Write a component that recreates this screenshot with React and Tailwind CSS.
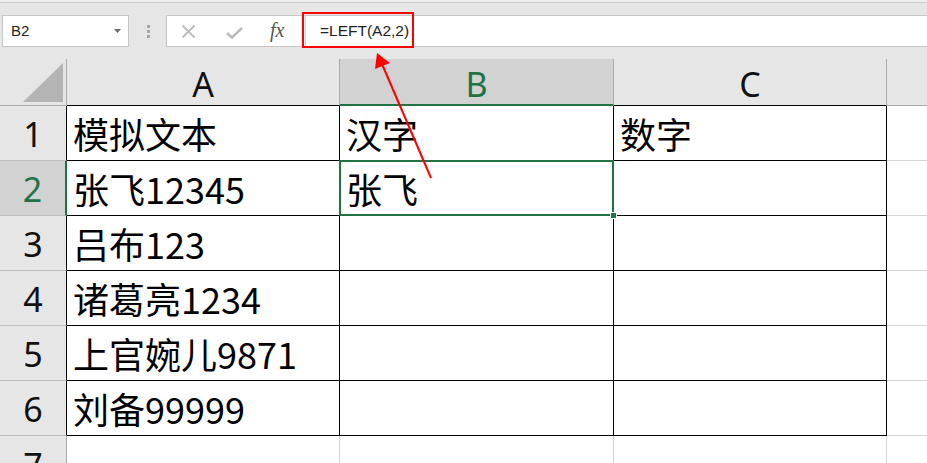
const ROWS = [
  ['模拟文本', '汉字', '数字'],
  ['张飞12345', '张飞', ''],
  ['吕布123', '', ''],
  ['诸葛亮1234', '', ''],
  ['上官婉儿9871', '', ''],
  ['刘备99999', '', ''],
]

const CELL_FONT = "font-['Noto_Sans_CJK_SC','Noto_Sans',sans-serif]"

function HeaderRow() {
  return (
    <div className="flex h-[47px]">
      {/* corner with select-all triangle */}
      <div className="w-[67px] shrink-0 border-r border-b border-[#ababab] relative">
        <svg width="67" height="47" className="absolute inset-0">
          <polygon points="23,43 63,4 63,43" fill="#b4b4b4" />
        </svg>
      </div>
      <div className="w-[273px] shrink-0 border-r border-[#ababab] border-b border-b-black flex items-center justify-center pt-[5px] text-[34px] text-[#111]">A</div>
      <div className="w-[274px] shrink-0 border-r border-[#ababab] border-b-2 border-b-[#217346] bg-[#d2d2d2] flex items-center justify-center pt-[6px] text-[34px] text-[#217346]">B</div>
      <div className="w-[273px] shrink-0 border-r border-[#ababab] border-b border-b-black flex items-center justify-center pt-[5px] text-[34px] text-[#111]">C</div>
      <div className="flex-1 border-b border-[#ababab]" />
    </div>
  )
}

function DataRow({ n, cells }) {
  const active = n === 2
  return (
    <div className="flex h-[55px]">
      <div
        className={
          active
            ? 'w-[67px] shrink-0 bg-[#d2d2d2] border-b border-[#bdbdbd] border-r-2 border-r-[#217346] flex items-center justify-center pt-[3px] text-[34px] text-[#217346]'
            : 'w-[67px] shrink-0 border-b border-[#bdbdbd] border-r border-r-black flex items-center justify-center pt-[3px] text-[34px] text-[#111]'
        }
      >
        {n}
      </div>
      {cells.map((text, i) => (
        <div
          key={i}
          className={`${i === 1 ? 'w-[274px]' : 'w-[273px]'} shrink-0 bg-white border-r border-b border-black relative flex items-center pl-[6px] ${CELL_FONT} text-[36px] leading-none text-black`}
        >
          {text}
          {active && i === 1 && (
            <div className="absolute top-[-1px] left-[-1px] right-[-1px] bottom-[-1px] border-2 border-[#217346] z-10">
              <div className="absolute right-[-5px] bottom-[-5px] w-[7px] h-[7px] bg-[#217346] border border-white" />
            </div>
          )}
        </div>
      ))}
      <div className="flex-1 bg-white border-b border-[#d4d4d4]" />
    </div>
  )
}

function EmptyRow({ n }) {
  return (
    <div className="flex h-[55px]">
      <div className="w-[67px] shrink-0 border-r border-[#ababab] flex items-center justify-center pt-[3px] text-[34px] text-[#111]">{n}</div>
      <div className="w-[273px] shrink-0 bg-white border-r border-[#d4d4d4]" />
      <div className="w-[274px] shrink-0 bg-white border-r border-[#d4d4d4]" />
      <div className="w-[273px] shrink-0 bg-white border-r border-[#d4d4d4]" />
      <div className="flex-1 bg-white" />
    </div>
  )
}

export default function App() {
  return (
    <div className="relative w-[927px] h-[463px] overflow-hidden bg-[#e6e6e6] font-['Noto_Sans',sans-serif]">
      <div className="h-[2px] bg-[#eeeeee]" />
      <div className="h-px bg-[#cfcfcf]" />

      {/* formula bar */}
      <div className="mt-[12px] flex h-[32px]">
        <div className="ml-[2px] w-[127px] shrink-0 bg-white border border-[#c6c6c6] flex items-center justify-between pl-[8px] pr-[7px] font-['Liberation_Sans',sans-serif] text-[15px] text-[#222]">
          <span>B2</span>
          <svg width="7" height="4"><polygon points="0,0 7,0 3.5,4" fill="#6a6a6a" /></svg>
        </div>
        <div className="w-[37px] shrink-0 flex flex-col items-center justify-center gap-[2px] pl-[1px]">
          <span className="w-[3px] h-[3px] bg-[#a8a8a8]" />
          <span className="w-[3px] h-[3px] bg-[#a8a8a8]" />
          <span className="w-[3px] h-[3px] bg-[#a8a8a8]" />
        </div>
        <div className="flex-1 bg-white border border-[#c6c6c6] border-r-0 flex items-center">
          <svg width="15" height="15" className="ml-[14px] shrink-0" viewBox="0 0 15 15">
            <path d="M1.5 1.5 L13.5 13.5 M13.5 1.5 L1.5 13.5" stroke="#bcbcbc" strokeWidth="1.8" fill="none" />
          </svg>
          <svg width="17" height="12" className="ml-[30px] mt-[3px] shrink-0" viewBox="0 0 17 12">
            <path d="M1 6 L6 10.5 L16 1" stroke="#bcbcbc" strokeWidth="2.6" fill="none" />
          </svg>
          <span className="ml-[27px] w-[20px] shrink-0 font-['Liberation_Serif',serif] italic text-[20px] leading-none text-[#555] pb-[2px]">fx</span>
          <div className="ml-[15px] h-full flex-1 border-l border-[#d4d4d4] flex items-center pl-[14px] font-['Liberation_Sans',sans-serif] text-[15.5px] text-[#222]">
            =LEFT(A2,2)
          </div>
        </div>
      </div>

      {/* sheet */}
      <div className="mt-[12px]">
        <HeaderRow />
        {ROWS.map((cells, i) => (
          <DataRow key={i} n={i + 1} cells={cells} />
        ))}
        <EmptyRow n={7} />
      </div>

      {/* annotations */}
      <svg width="927" height="463" className="absolute inset-0 pointer-events-none z-20">
        <rect x="303" y="13" width="110" height="34" fill="none" stroke="#ff0000" strokeWidth="2" />
        <line x1="431" y1="178" x2="382" y2="64" stroke="#ff0000" strokeWidth="2" />
        <polygon points="377,53 375,69 390,63" fill="#ff0000" />
      </svg>
    </div>
  )
}
